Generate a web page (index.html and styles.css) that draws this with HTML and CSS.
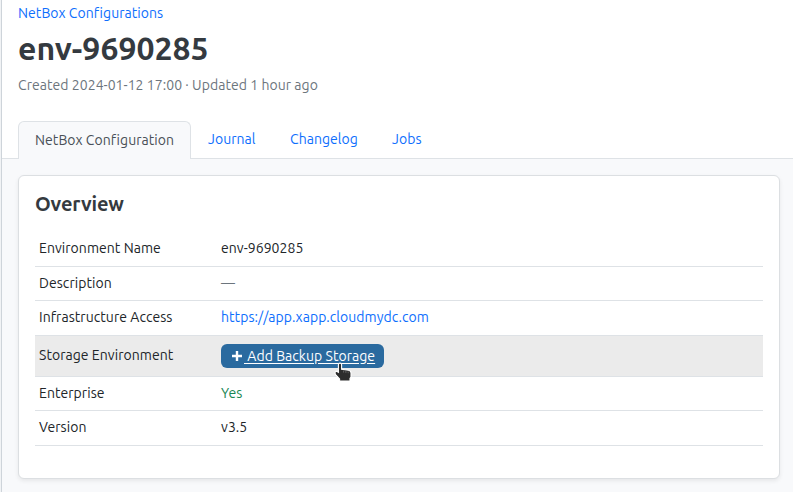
FILE: index.html
```
<!DOCTYPE html>
<html lang="en">
<head>
<meta charset="utf-8">
<title>env-9690285 | NetBox</title>
<link rel="stylesheet" href="styles.css">
</head>
<body>
<main class="page">
  <header class="header">
    <nav class="breadcrumb"><a href="#">NetBox Configurations</a></nav>
    <h1 class="title">env-9690285</h1>
    <p class="meta">Created 2024-01-12 17:00 · Updated 1 hour ago</p>
  </header>
  <nav class="tabs">
    <a class="tab tab-active" href="#">NetBox Configuration</a>
    <a class="tab tab-journal" href="#">Journal</a>
    <a class="tab tab-changelog" href="#">Changelog</a>
    <a class="tab tab-jobs" href="#">Jobs</a>
  </nav>
  <section class="content">
    <div class="card">
      <h2 class="card-title">Overview</h2>
      <dl class="rows">
        <div class="row row-first"><dt>Environment Name</dt><dd>env-9690285</dd></div>
        <div class="row row-short"><dt>Description</dt><dd class="muted">—</dd></div>
        <div class="row row-tall"><dt>Infrastructure Access</dt><dd><a href="#">https://app.xapp.cloudmydc.com</a></dd></div>
        <div class="row row-hover"><dt>Storage Environment</dt><dd><a class="button" href="#"><svg class="plus" viewBox="0 0 10 10"><path d="M5 0v10M0 5h10"/></svg><span class="button-label">&nbsp;Add Backup Storage</span>
          <svg class="pointer" viewBox="0 0 18 20"><path d="M4.4 2.6C4.4.6 7.6.6 7.6 2.6v4.6l7 1c1.7.3 2.4 1.2 2.4 2.7v4.2l-1 1.4v2.6H5.6v-2.1L1.6 12.6C.4 10.7 1.2 9 3 9.4l1.4.8z"/><path class="knuckles" d="M9.6 8.6v2M11.9 9v2M14.2 9.5v1.7"/></svg></a></dd></div>
        <div class="row row-short"><dt>Enterprise</dt><dd class="yes">Yes</dd></div>
        <div class="row row-tall"><dt>Version</dt><dd>v3.5</dd></div>
      </dl>
    </div>
  </section>
</main>
</body>
</html>
```
FILE: styles.css
```
* { box-sizing: border-box; }
body {
  margin: 0;
  height: 492px;
  overflow: hidden;
  background: #f1f3f5;
  color: #212529;
  font-family: Ubuntu, "Noto Sans", sans-serif;
  font-size: 14px;
  line-height: 21px;
  letter-spacing: .05px;
}
a { color: #0d6efd; text-decoration: none; }
h1, h2, p, dl, dd { margin: 0; }
.page {
  margin-left: 1px;
  height: 492px;
  display: flex;
  flex-direction: column;
  border-left: 1px solid #ced4da;
  background: #fff;
}
.header { height: 121px; padding: 3px 16px 0; }
.title {
  margin-top: 5px;
  color: #343a40;
  font-size: 32px;
  font-weight: 600;
  line-height: 38px;
  letter-spacing: 0;
}
.meta { margin-top: 8px; color: #6c757d; }
.tabs {
  display: flex;
  height: 38px;
  padding-left: 16px;
  border-bottom: 1px solid #dee2e6;
}
.tab { padding: 8px 17px 0; white-space: nowrap; }
.tab-active {
  width: 173px;
  height: 38px;
  padding: 8px 16px 0;
  border: 1px solid #dee2e6;
  border-bottom: 0;
  border-radius: 6px 6px 0 0;
  background: #f8f9fb;
  color: #495057;
}
.tab-journal { width: 82px; }
.tab-changelog { width: 102px; }
.content { flex: 1; padding: 16px 13px 13px 16px; background: #f8f9fb; }
.card {
  height: 304px;
  padding: 16px;
  border: 1px solid #dcdfe2;
  border-radius: 6px;
  background: #fff;
  box-shadow: 0 2px 4px rgba(0, 0, 0, .075);
}
.card-title {
  height: 38px;
  padding-top: 1px;
  color: #343a40;
  font-size: 20px;
  font-weight: 600;
  line-height: 22px;
  letter-spacing: -.15px;
}
.row {
  display: flex;
  align-items: center;
  padding: 0 4px;
  border-bottom: 1px solid #dee2e6;
  white-space: nowrap;
}
.row-first { height: 37px; }
.row-short { height: 34px; }
.row-tall { height: 35px; padding-bottom: 2px; }
.row-hover { height: 41px; background: #ebebeb; }
.row dt { width: 182px; }
.row-hover dt { padding-bottom: 1px; }
.muted { color: #6c757d; }
.yes { color: #198754; }
.button {
  position: relative;
  display: flex;
  align-items: center;
  width: 163px;
  height: 24px;
  padding-left: 11px;
  border-radius: 6px;
  background: #2a6a9f;
  color: #fff;
}
.plus { width: 10px; height: 10px; margin-right: 2px; fill: none; stroke: #fff; stroke-width: 2.4; }
.button-label { text-decoration: underline; text-underline-offset: 2px; }
.pointer {
  position: absolute;
  left: 113px;
  top: 18px;
  width: 18px;
  height: 20px;
  fill: #2d2d2d;
  stroke: #fff;
  stroke-width: 1.1;
}
.pointer .knuckles { stroke: #777; stroke-width: .7; }
```
